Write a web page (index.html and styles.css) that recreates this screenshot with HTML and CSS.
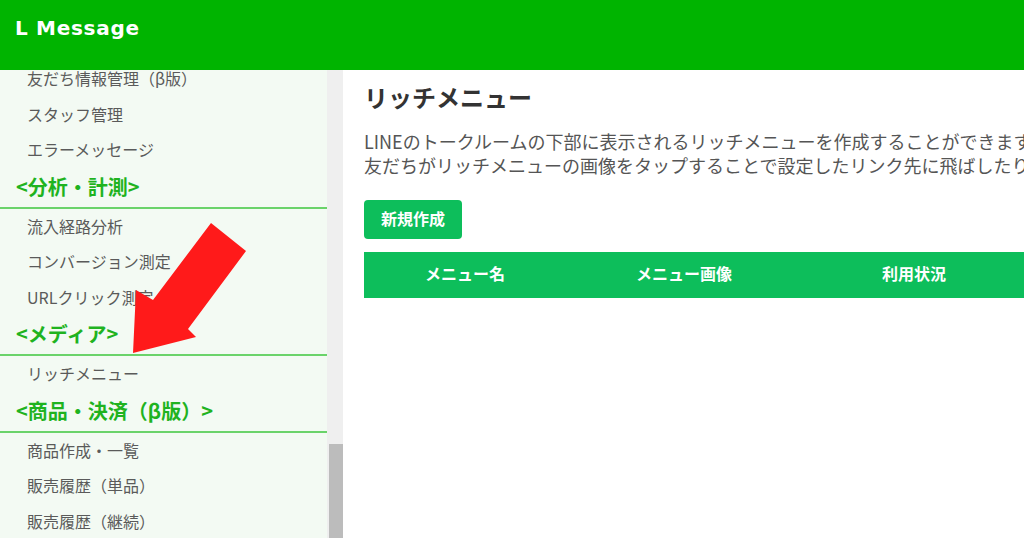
FILE: index.html
```html
<!DOCTYPE html>
<html lang="ja">
<head>
<meta charset="utf-8">
<title>L Message - リッチメニュー</title>
<link rel="stylesheet" href="styles.css">
</head>
<body>
<header class="topbar">
  <div class="logo">L Message</div>
</header>
<div class="layout">
  <aside class="sidebar">
    <nav class="navlist">
      <div class="item">友だち情報管理（β版）</div>
      <div class="item">スタッフ管理</div>
      <div class="item">エラーメッセージ</div>
      <div class="heading">&lt;分析・計測&gt;</div>
      <div class="item">流入経路分析</div>
      <div class="item">コンバージョン測定</div>
      <div class="item">URLクリック測定</div>
      <div class="heading">&lt;メディア&gt;</div>
      <div class="item">リッチメニュー</div>
      <div class="heading">&lt;商品・決済（β版）&gt;</div>
      <div class="item">商品作成・一覧</div>
      <div class="item">販売履歴（単品）</div>
      <div class="item">販売履歴（継続）</div>
    </nav>
    <div class="scrolltrack"><div class="scrollthumb"></div></div>
    <svg class="arrow" width="130" height="140" viewBox="125 215 130 140">
      <polygon points="211,223 246,251 188,329 196,337 133,353 136,290 153,300" fill="#ff1a1a"/>
    </svg>
  </aside>
  <main class="content">
    <h1 class="title">リッチメニュー</h1>
    <p class="desc">LINEのトークルームの下部に表示されるリッチメニューを作成することができます。<br>友だちがリッチメニューの画像をタップすることで設定したリンク先に飛ばしたりすることができます。</p>
    <button class="btn">新規作成</button>
    <div class="table-head">
      <div class="col c1">メニュー名</div>
      <div class="col c2">メニュー画像</div>
      <div class="col c3">利用状況</div>
    </div>
  </main>
</div>
</body>
</html>
```
FILE: styles.css
```css
* { box-sizing: border-box; }
html, body { margin: 0; padding: 0; }
body {
  width: 1024px;
  height: 538px;
  overflow: hidden;
  font-family: "Noto Sans CJK JP", "Noto Sans", sans-serif;
  background: #fff;
}
.topbar {
  height: 70px;
  background: #00b400;
  display: flex;
  align-items: flex-start;
  padding: 14px 0 0 15px;
  position: relative;
  z-index: 2;
}
.logo {
  font-family: "DejaVu Sans", sans-serif;
  font-weight: bold;
  font-size: 20px;
  letter-spacing: 0.7px;
  color: #fff;
  line-height: 28px;
}
.layout {
  display: flex;
  height: 468px;
}
.sidebar {
  width: 343px;
  flex: none;
  display: flex;
  position: relative;
  overflow: hidden;
}
.navlist {
  width: 327px;
  background: #f3faf3;
  margin-top: -9px;
}
.item {
  height: 35.5px;
  line-height: 35.5px;
  padding-left: 27px;
  font-size: 16px;
  color: #5a5a5a;
  white-space: nowrap;
}
.heading {
  height: 41px;
  line-height: 38px;
  padding-left: 16px;
  font-size: 20px;
  font-weight: bold;
  color: #1fb31f;
  border-bottom: 2px solid #6ad36a;
  white-space: nowrap;
}
.scrolltrack {
  width: 16px;
  background: #efefef;
  display: flex;
  flex-direction: column;
  padding-left: 2px;
}
.scrollthumb {
  margin-top: 374px;
  flex: 1;
  background: #bcbcbc;
}
.arrow {
  position: absolute;
  left: 125px;
  top: 145px;
}
.content {
  flex: 1;
  padding: 12px 0 0 21px;
  overflow: hidden;
}
.title {
  margin: 0;
  font-size: 24px;
  line-height: 30px;
  font-weight: bold;
  color: #333;
}
.desc {
  margin: 17px 0 0 0;
  font-size: 18px;
  line-height: 24px;
  color: #555;
  white-space: nowrap;
}
.btn {
  display: block;
  margin-top: 23px;
  width: 98px;
  height: 39px;
  border: none;
  border-radius: 4px;
  background: #0dbe5b;
  color: #fff;
  font-family: "Noto Sans CJK JP", sans-serif;
  font-weight: bold;
  font-size: 16px;
  padding: 0 0 4px 0;
}
.table-head {
  margin-top: 13px;
  height: 46px;
  width: 700px;
  background: #0dbe5b;
  display: grid;
  grid-template-columns: 202px 236px 224px;
  align-items: center;
  padding-bottom: 5px;
}
.col {
  text-align: center;
  color: #fff;
  font-weight: bold;
  font-size: 16px;
}
```
